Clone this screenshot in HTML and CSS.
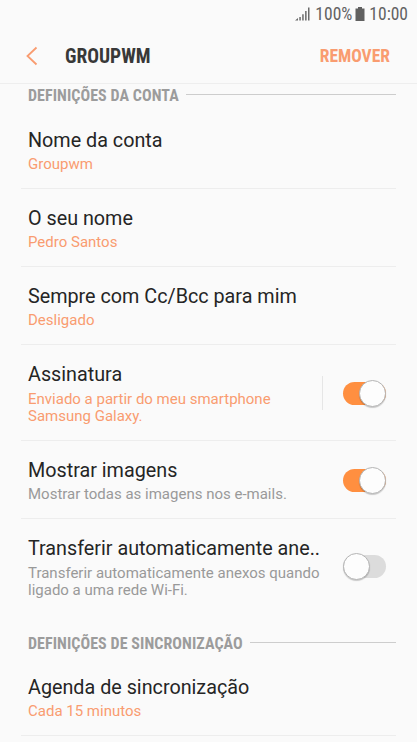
FILE: index.html
```html
<!DOCTYPE html>
<html lang="pt">
<head>
    <meta charset="UTF-8">
    <meta name="viewport" content="width=device-width, initial-scale=1.0">
    <title>Groupwm</title>
    <link rel="stylesheet" href="styles.css">
</head>
<body>
    <div class="status-bar">
        <svg class="signal" width="15" height="14" viewBox="0 0 15 14">
            <path d="M0 13.5L3 11v2.5zM4.3 10h1.5v3.5H4.3zM7.2 7.2h1.5v6.3H7.2zM10.1 4h1.5v9.5h-1.5zM13 .5h1.5v13H13z" fill="#6b6b6b"/>
        </svg>
        <span class="percent">100%</span>
        <svg class="battery" width="10" height="14" viewBox="0 0 10 14">
            <path d="M3 0h4v1.5h2.5V14H.5V1.5H3z" fill="#606060"/>
        </svg>
        <span class="time">10:00</span>
    </div>
    <header class="header">
        <svg class="back" width="12" height="20" viewBox="0 0 12 20">
            <path d="M10.5 1.5L1.5 10l9 8.5" fill="none" stroke="#f99c70" stroke-width="1.8"/>
        </svg>
        <h1>GROUPWM</h1>
        <button class="remove">REMOVER</button>
    </header>
    <main class="settings">
        <h2 class="section"><span>DEFINIÇÕES DA CONTA</span></h2>
        <div class="row">
            <div class="text">
                <div class="title">Nome da conta</div>
                <div class="value">Groupwm</div>
            </div>
        </div>
        <div class="row">
            <div class="text">
                <div class="title">O seu nome</div>
                <div class="value">Pedro Santos</div>
            </div>
        </div>
        <div class="row">
            <div class="text">
                <div class="title">Sempre com Cc/Bcc para mim</div>
                <div class="value">Desligado</div>
            </div>
        </div>
        <div class="row">
            <div class="text">
                <div class="title">Assinatura</div>
                <div class="value">Enviado a partir do meu smartphone<br>Samsung Galaxy.</div>
            </div>
            <div class="divider"></div>
            <div class="switch on"></div>
        </div>
        <div class="row">
            <div class="text">
                <div class="title">Mostrar imagens</div>
                <div class="value muted">Mostrar todas as imagens nos e-mails.</div>
            </div>
            <div class="switch on"></div>
        </div>
        <div class="row last">
            <div class="text">
                <div class="title">Transferir automaticamente ane..</div>
                <div class="value muted">Transferir automaticamente anexos quando<br>ligado a uma rede Wi-Fi.</div>
            </div>
            <div class="switch"></div>
        </div>
        <h2 class="section"><span>DEFINIÇÕES DE SINCRONIZAÇÃO</span></h2>
        <div class="row">
            <div class="text">
                <div class="title">Agenda de sincronização</div>
                <div class="value">Cada 15 minutos</div>
            </div>
        </div>
    </main>
</body>
</html>
```
FILE: styles.css
```css
* {
    box-sizing: border-box;
}
body {
    font-family: Roboto, "Liberation Sans", sans-serif;
    background-color: #fafafa;
    margin: 0;
    height: 742px;
    overflow: hidden;
}
.status-bar {
    display: flex;
    align-items: center;
    justify-content: flex-end;
    height: 28px;
    padding-right: 9px;
    font-family: "Roboto Condensed", Roboto, sans-serif;
    font-stretch: 75%;
    font-size: 17.5px;
    color: #626262;
}
.percent {
    margin: 0 3px 0 5px;
}
.time {
    margin-left: 4px;
}
.header {
    display: flex;
    align-items: center;
    height: 56px;
    padding: 0 27px 0 26px;
    border-bottom: 1px solid #eee;
    font-family: "Roboto Condensed", Roboto, sans-serif;
    font-stretch: 75%;
}
h1 {
    flex: 1;
    margin: 2px 0 0 27px;
    font-size: 19.5px;
    font-weight: bold;
    color: #383838;
}
.remove {
    padding: 0;
    border: none;
    background: none;
    font: inherit;
    font-stretch: 75%;
    font-size: 17.5px;
    font-weight: bold;
    color: #f99c70;
}
.settings {
    margin: -3.6px 21px 0;
}
.section {
    display: flex;
    align-items: center;
    height: 30px;
    margin: 0;
    padding-left: 7px;
    font-family: "Roboto Condensed", Roboto, sans-serif;
    font-stretch: 75%;
    font-size: 16px;
    font-weight: bold;
    letter-spacing: 0.06px;
    color: #9c9c9c;
    white-space: nowrap;
}
.section::after {
    content: "";
    flex: 1;
    height: 1px;
    margin: 0 0 1px 7px;
    background-color: #cdcdcd;
}
.row {
    display: flex;
    align-items: center;
    padding: 18.2px 10px 14.4px 7px;
    border-bottom: 1px solid #ededed;
}
.row.last {
    margin-bottom: 14px;
    border-bottom: none;
}
.text {
    flex: 1;
    white-space: nowrap;
}
.title {
    font-size: 19.75px;
    line-height: 24px;
    color: #252525;
}
.value {
    margin-top: 3.2px;
    font-size: 15px;
    line-height: 17.5px;
    color: #f99c70;
}
.value.muted {
    color: #999;
}
.divider {
    width: 1px;
    height: 34px;
    margin: 0 20px 3px 0;
    background-color: #e6e6e6;
}
.switch {
    display: flex;
    align-items: center;
    width: 43px;
    height: 23px;
    margin-bottom: 2px;
    border-radius: 12px;
    background-color: #dcdcdc;
}
.switch::before {
    content: "";
    flex: none;
    width: 25px;
    height: 25px;
    border: 1px solid #b5b5b5;
    border-radius: 50%;
    background-color: #fdfdfd;
    box-shadow: 0 1px 1px rgba(0, 0, 0, 0.2);
}
.switch.on {
    justify-content: flex-end;
    background-color: #ff8f40;
}
.row.last .switch {
    margin-bottom: 4px;
}
```
